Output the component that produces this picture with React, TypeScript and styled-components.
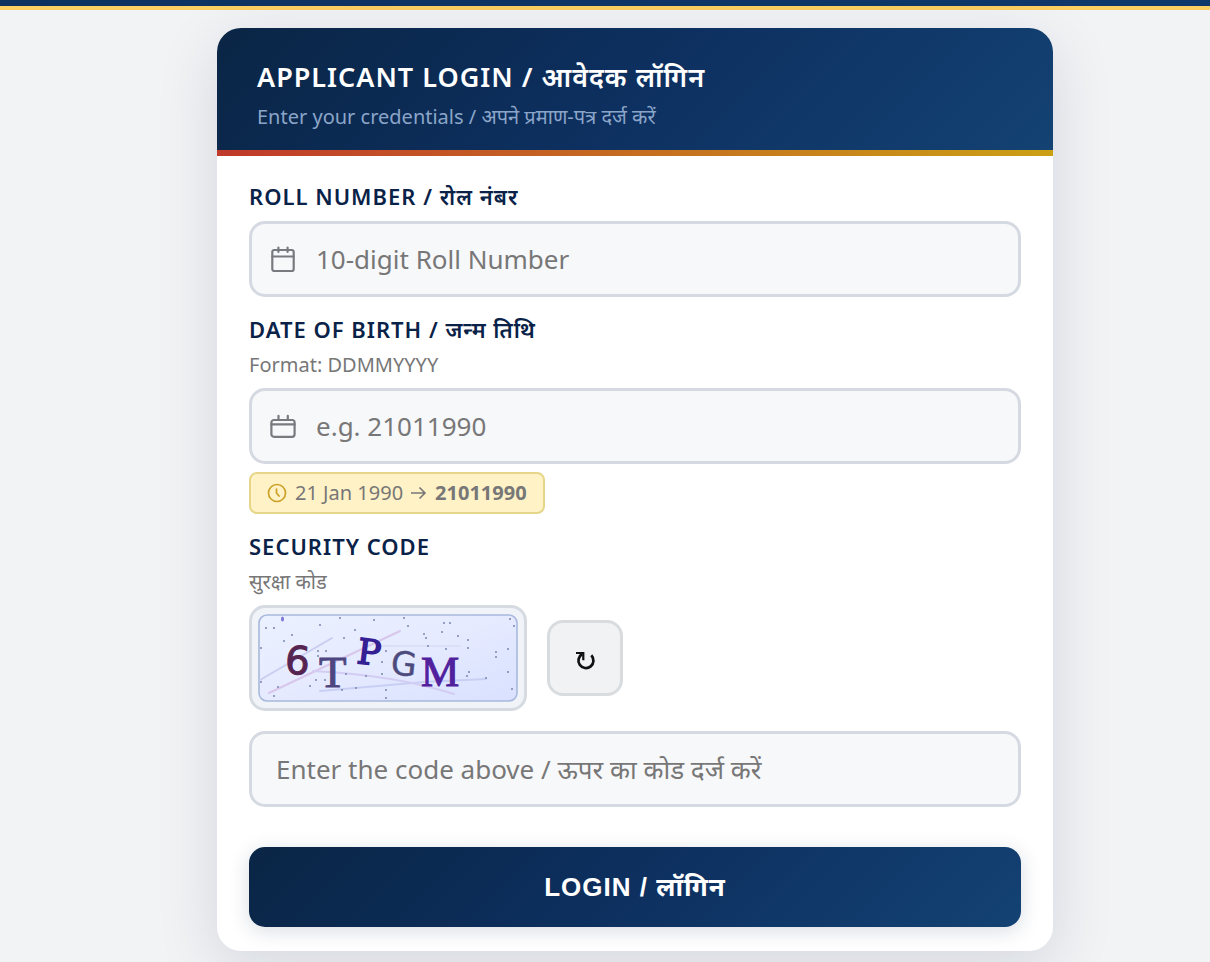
import React from 'react';
import styled, { createGlobalStyle } from 'styled-components';

const GlobalStyle = createGlobalStyle`
  *, *::before, *::after { box-sizing: border-box; }
  body {
    margin: 0;
    min-height: 100vh;
    background: #f1f3f5;
    font-family: 'Noto Sans', 'Noto Sans Devanagari', sans-serif;
    overflow-x: hidden;
  }
`;

const TopBar = styled.header`
  height: 10px;
  background: linear-gradient(90deg, #0d3260, #10396b);
  border-bottom: 4px solid #fccf62;
`;

const Page = styled.main`
  display: flex;
  justify-content: center;
  padding: 18px 0 48px 60px;
`;

const Card = styled.section`
  width: 100%;
  max-width: 836px;
  background: #fff;
  border-radius: 24px;
  overflow: hidden;
  box-shadow: 0 16px 64px rgba(10, 20, 60, 0.12);
`;

const CardHeader = styled.div`
  padding: 27px 40px 17px;
  background: linear-gradient(135deg, #0a2545 0%, #0d3060 50%, #134273 100%);
`;

const Strip = styled.div`
  height: 6px;
  background: linear-gradient(90deg, #c0392b, #cba015);
`;

const Title = styled.h1`
  margin: 0;
  color: #fff;
  font-size: 27px;
  font-weight: 600;
  line-height: 44px;
  letter-spacing: 1px;
`;

const Subtitle = styled.p`
  margin: 2px 0 0;
  color: #8ba5c9;
  font-size: 20px;
  line-height: 32px;
`;

const Form = styled.form`
  display: flex;
  flex-direction: column;
  gap: 16px;
  padding: 24px 32px;
`;

const Field = styled.div`
  display: flex;
  flex-direction: column;
  align-items: flex-start;
`;

const Label = styled.label`
  padding-bottom: 2px;
  color: #0a2248;
  font-size: 22px;
  font-weight: 600;
  line-height: 32px;
  letter-spacing: 1px;
`;

const Hint = styled.span`
  margin-top: 4px;
  color: #777;
  font-size: 20px;
  line-height: 28px;
`;

const InputBox = styled.div<{ $gap: number }>`
  display: flex;
  align-items: center;
  gap: 19px;
  width: 100%;
  height: 76px;
  margin-top: ${(p) => p.$gap}px;
  padding: 0 17px;
  border: 3px solid #d5d9e1;
  border-radius: 16px;
  background: #f7f8fa;
  color: #777b80;
`;

const Input = styled.input`
  flex: 1;
  min-width: 0;
  padding: 0;
  border: 0;
  outline: 0;
  background: transparent;
  color: #1c2a40;
  font: inherit;
  font-size: 26px;
  line-height: 40px;

  &::placeholder {
    color: #777;
    opacity: 1;
  }
`;

const CodeInput = styled(Input)`
  padding-left: 7px;
`;

const Example = styled.div`
  display: flex;
  align-items: center;
  gap: 8px;
  height: 42px;
  margin-top: 8px;
  padding: 0 16px;
  border: 2px solid #e5d689;
  border-radius: 8px;
  background: #fff2c6;
  color: #777;
  font-size: 20px;
  line-height: 36px;
`;

const CaptchaRow = styled.div`
  display: flex;
  align-items: center;
  gap: 20px;
  margin-top: 9px;
`;

const CaptchaFrame = styled.div`
  display: flex;
  padding: 6px;
  border: 3px solid #d5dbe0;
  border-radius: 16px;
  background: #f0f3f7;
`;

const RefreshButton = styled.button`
  display: flex;
  align-items: center;
  justify-content: center;
  width: 76px;
  height: 76px;
  padding: 0;
  border: 3px solid #d8dcdf;
  border-radius: 16px;
  background: #f0f2f4;
  color: #111;
  cursor: pointer;
`;

const LoginButton = styled.button`
  height: 80px;
  margin-top: 24px;
  padding: 0 0 2px;
  border: 0;
  border-radius: 16px;
  background: linear-gradient(135deg, #0a2545 0%, #0d3060 50%, #134273 100%);
  box-shadow: 0 4px 20px rgba(10, 37, 80, 0.16);
  color: #fff;
  font-family: 'Liberation Sans', 'Noto Sans', 'Noto Sans Devanagari', sans-serif;
  font-size: 26px;
  font-weight: 700;
  letter-spacing: 1px;
  cursor: pointer;
`;

const RollIcon = () => (
  <svg width="28" height="28" viewBox="0 0 28 28" fill="none" stroke="currentColor" strokeWidth="2.2" strokeLinecap="round" aria-hidden="true">
    <rect x="3.3" y="5" width="21.4" height="21" rx="2" />
    <path d="M3.3 11.5H24.7M9.4 2.5V7M18.6 2.5V7" />
  </svg>
);

const DateIcon = () => (
  <svg width="28" height="28" viewBox="0 0 28 28" fill="none" stroke="currentColor" strokeWidth="2.2" strokeLinecap="round" aria-hidden="true">
    <rect x="2.4" y="8" width="23.2" height="16.8" rx="2.5" />
    <path d="M2.4 12.4H25.6M9.5 3.8V7.500M18.8 3.8V7.500" />
  </svg>
);

const ClockIcon = () => (
  <svg width="20" height="20" viewBox="0 0 20 20" fill="none" stroke="#cda128" strokeWidth="1.7" strokeLinecap="round" strokeLinejoin="round" aria-hidden="true">
    <circle cx="10" cy="10" r="8.5" />
    <path d="M9.5 6V10L12 13" />
  </svg>
);

const ArrowIcon = () => (
  <svg width="16" height="16" viewBox="0 0 16 16" fill="none" stroke="currentColor" strokeWidth="1.6" aria-hidden="true">
    <path d="M0 8H14M8.500 2.500L14 8L8.500 13.500" />
  </svg>
);

const RefreshIcon = () => (
  <svg width="24" height="24" viewBox="0 0 24 24" fill="none" stroke="currentColor" strokeWidth="2.7" aria-hidden="true">
    <path d="M3 7H10.3V14.2" strokeWidth="2.200" />
    <path d="M9.300 8A7.500 7.500 0 1 0 18.300 9.300" />
  </svg>
);

const specks: [number, number][] = [
  [8, 14], [16, 14], [34, 21], [26, 27], [62, 11], [82, 4], [97, 16], [116, 6], [146, 4],
  [150, 12], [166, 20], [168, 24], [184, 18], [186, 9], [192, 9], [200, 22], [210, 26],
  [210, 34], [252, 5], [256, 12], [250, 35], [238, 38], [238, 43], [250, 58], [254, 75],
  [3, 34], [3, 68], [52, 72], [58, 66], [67, 66], [86, 24], [20, 73], [16, 82], [98, 74],
  [88, 60], [60, 42], [68, 37], [60, 37], [128, 76], [128, 84], [128, 37], [124, 48],
  [124, 60], [108, 62], [84, 76], [211, 58], [209, 62], [228, 64], [188, 35], [170, 32],
];

const Captcha = () => (
  <svg width="260" height="88" viewBox="0 0 260 88" role="img" aria-label="Security code image">
    <defs>
      <linearGradient id="captchaBg" x1="0" y1="0" x2="1" y2="1">
        <stop offset="0" stopColor="#ebf1ff" />
        <stop offset="0.5" stopColor="#e5eaff" />
        <stop offset="1" stopColor="#d9e1ff" />
      </linearGradient>
    </defs>
    <rect x="1" y="1" width="258" height="86" rx="8" fill="url(#captchaBg)" stroke="#a9b8dd" strokeWidth="1.6" />
    <g fill="none" strokeWidth="2" strokeLinecap="round">
      <path d="M2 66L74 24" stroke="#cbcdf0" />
      <path d="M11 79L142 17" stroke="#d9c6eb" />
      <path d="M62 77L166 68L228 65" stroke="#c8cff4" />
      <path d="M55 57Q136 61 196 80" stroke="#d3ccf3" />
      <path d="M120 32H202" stroke="#dddff8" />
    </g>
    <g fill="#7787b1">
      {specks.map(([x, y], i) => (
        <circle key={i} cx={x} cy={y} r="1" />
      ))}
    </g>
    <ellipse cx="24.5" cy="5" rx="1.5" ry="2.5" fill="#8175dc" />
    <text transform="translate(26 59) rotate(5)" fill="#552451" fontFamily="DejaVu Sans, sans-serif" fontSize="39" stroke="#552451" strokeWidth="1">6</text>
    <text transform="translate(61 73)" fill="#4d4680" fontFamily="Liberation Serif, serif" fontSize="45" stroke="#4d4680" strokeWidth="1">T</text>
    <text transform="translate(98 49) rotate(7)" fill="#352093" fontFamily="DejaVu Serif, serif" fontSize="35" stroke="#352093" strokeWidth="1.5">P</text>
    <text transform="translate(132 60) rotate(6)" fill="#4d4b7d" fontFamily="DejaVu Sans, sans-serif" fontSize="33" stroke="#4d4b7d" strokeWidth="0.5">G</text>
    <text transform="translate(163 72)" fill="#51219d" fontFamily="Liberation Serif, serif" fontSize="43" stroke="#51219d" strokeWidth="1">M</text>
  </svg>
);

export default function App() {
  return (
    <>
      <GlobalStyle />
      <TopBar />
      <Page>
        <Card>
          <CardHeader>
            <Title>APPLICANT LOGIN / आवेदक लॉगिन</Title>
            <Subtitle>Enter your credentials / अपने प्रमाण-पत्र दर्ज करें</Subtitle>
          </CardHeader>
          <Strip />
          <Form onSubmit={(e) => e.preventDefault()}>
            <Field>
              <Label htmlFor="roll">ROLL NUMBER / रोल नंबर</Label>
              <InputBox $gap={7}>
                <RollIcon />
                <Input id="roll" inputMode="numeric" maxLength={10} placeholder="10-digit Roll Number" />
              </InputBox>
            </Field>
            <Field>
              <Label htmlFor="dob">DATE OF BIRTH / जन्म तिथि</Label>
              <Hint>Format: DDMMYYYY</Hint>
              <InputBox $gap={9}>
                <DateIcon />
                <Input id="dob" inputMode="numeric" maxLength={8} placeholder="e.g. 21011990" />
              </InputBox>
              <Example>
                <ClockIcon />
                <span>21 Jan 1990</span>
                <ArrowIcon />
                <strong>21011990</strong>
              </Example>
            </Field>
            <Field>
              <Label htmlFor="code">SECURITY CODE</Label>
              <Hint lang="hi">सुरक्षा कोड</Hint>
              <CaptchaRow>
                <CaptchaFrame>
                  <Captcha />
                </CaptchaFrame>
                <RefreshButton type="button" aria-label="Refresh security code">
                  <RefreshIcon />
                </RefreshButton>
              </CaptchaRow>
              <InputBox $gap={20}>
                <CodeInput id="code" autoComplete="off" placeholder="Enter the code above / ऊपर का कोड दर्ज करें" />
              </InputBox>
            </Field>
            <LoginButton type="submit">LOGIN / लॉगिन</LoginButton>
          </Form>
        </Card>
      </Page>
    </>
  );
}
